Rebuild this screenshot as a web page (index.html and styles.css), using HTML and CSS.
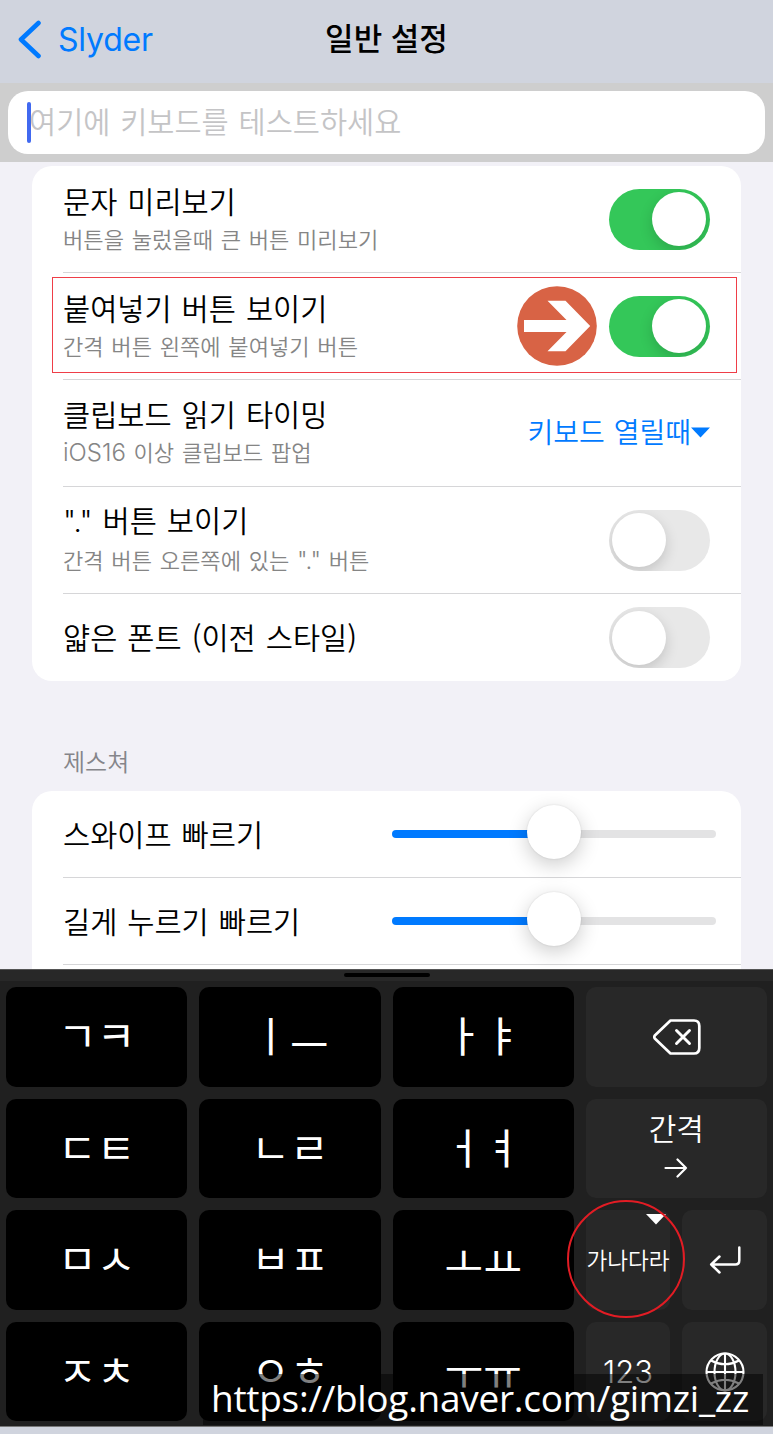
FILE: index.html
```html
<!DOCTYPE html>
<html lang="ko">
<head>
  <meta charset="UTF-8" />
  <title>일반 설정</title>
  <link rel="stylesheet" href="styles.css">
</head>
<body>

  <header class="navbar">
    <a class="back">
      <svg width="24" height="40" viewBox="0 0 24 40"><path d="M20.5 3 L3 19.5 L20.5 36" fill="none" stroke="#007aff" stroke-width="4.6" stroke-linecap="round" stroke-linejoin="round"/></svg>
      <span>Slyder</span>
    </a>
    <h1>일반 설정</h1>
  </header>

  <div class="search">
    <div class="field"><i class="caret"></i><span>여기에 키보드를 테스트하세요</span></div>
  </div>

  <main class="content">
    <section class="card">
      <div class="row">
        <div class="label"><h2>문자 미리보기</h2><p>버튼을 눌렀을때 큰 버튼 미리보기</p></div>
        <span class="toggle on"></span>
      </div>
      <div class="row">
        <div class="label"><h2>붙여넣기 버튼 보이기</h2><p>간격 버튼 왼쪽에 붙여넣기 버튼</p></div>
        <svg class="pointer" width="80" height="80" viewBox="0 0 80 80"><circle cx="40" cy="40" r="39.8" fill="#d86345"/><path d="M7 34 H49.5 L30.5 14.8 H48.5 L73.2 40 L48.5 65.2 H30.5 L49.5 46 H7 Z" fill="#fff"/></svg>
        <span class="toggle on"></span>
        <div class="highlight"></div>
      </div>
      <div class="row">
        <div class="label"><h2>클립보드 읽기 타이밍</h2><p><span class="latin">iOS16</span> 이상 클립보드 팝업</p></div>
        <span class="select"><span>키보드 열릴때</span><svg width="19" height="11" viewBox="0 0 19 11"><path d="M0 .5 H19 L9.5 10.5 Z" fill="#007aff"/></svg></span>
      </div>
      <div class="row">
        <div class="label"><h2><span class="latin">"."</span> 버튼 보이기</h2><p>간격 버튼 오른쪽에 있는 <span class="latin">"."</span> 버튼</p></div>
        <span class="toggle"></span>
      </div>
      <div class="row short">
        <h2>얇은 폰트 (이전 스타일)</h2>
        <span class="toggle"></span>
      </div>
    </section>

    <h3 class="group-title">제스쳐</h3>

    <section class="card cut">
      <div class="row short">
        <h2>스와이프 빠르기</h2>
        <div class="slider"><i class="knob"></i></div>
      </div>
      <div class="row short">
        <h2>길게 누르기 빠르기</h2>
        <div class="slider"><i class="knob"></i></div>
      </div>
    </section>
  </main>

  <div class="keyboard">
    <div class="grabber"><i></i></div>
    <div class="keys">
      <div class="key"><b>ㄱ</b><b>ㅋ</b></div>
      <div class="key"><b>ㅣ</b><b class="low">ㅡ</b></div>
      <div class="key"><b>ㅏ</b><b>ㅑ</b></div>
      <div class="key fn">
        <svg class="delete" width="48" height="36" viewBox="0 0 48 36"><path d="M17.5 1.5 H41 Q46.3 1.5 46.3 7 V29 Q46.3 34.5 41 34.5 H17.5 L1.8 19.5 Q.8 18 1.8 16.5 Z" fill="none" stroke="#fff" stroke-width="2.7" stroke-linejoin="round"/><path d="M23.5 11.5 L36.5 24.5 M36.5 11.5 L23.5 24.5" stroke="#fff" stroke-width="2.9" stroke-linecap="round"/></svg>
      </div>

      <div class="key"><b>ㄷ</b><b>ㅌ</b></div>
      <div class="key"><b>ㄴ</b><b>ㄹ</b></div>
      <div class="key"><b>ㅓ</b><b>ㅕ</b></div>
      <div class="key fn space">
        <span>간격</span>
        <svg width="24" height="20" viewBox="0 0 24 20"><path d="M1.5 10 H22 M13.5 1.5 L22 10 L13.5 18.5" fill="none" stroke="#fff" stroke-width="2.2" stroke-linecap="round" stroke-linejoin="round"/></svg>
      </div>

      <div class="key"><b>ㅁ</b><b>ㅅ</b></div>
      <div class="key"><b>ㅂ</b><b>ㅍ</b></div>
      <div class="key mid"><b>ㅗ</b><b>ㅛ</b></div>
      <div class="pair">
        <div class="key fn lang">
          <span>가나다라</span>
          <svg class="corner" width="20" height="11" viewBox="0 0 20 11"><path d="M0 0 H20 L10 10.5 Z" fill="#fff"/></svg>
          <div class="ring"></div>
        </div>
        <div class="key fn">
          <svg width="32" height="28" viewBox="0 0 32 28"><path d="M30.3 1.5 V14.5 Q30.3 18.5 26.3 18.5 H2.2 M10.5 10.5 L2.2 18.5 L10.5 26.5" fill="none" stroke="#fff" stroke-width="2.5" stroke-linecap="round" stroke-linejoin="round"/></svg>
        </div>
      </div>

      <div class="key"><b>ㅈ</b><b>ㅊ</b></div>
      <div class="key"><b>ㅇ</b><b>ㅎ</b></div>
      <div class="key mid"><b>ㅜ</b><b>ㅠ</b></div>
      <div class="pair">
        <div class="key fn num">123</div>
        <div class="key fn">
          <svg width="40" height="40" viewBox="0 0 40 40" fill="none" stroke="#fff" stroke-width="2.1"><circle cx="20" cy="20" r="18.5"/><ellipse cx="20" cy="20" rx="10.5" ry="18.5"/><path d="M20 1.5 V38.5 M1.5 20 H38.5 M6 8.5 Q20 16 34 8.5 M6 31.5 Q20 24 34 31.5"/></svg>
        </div>
      </div>
    </div>
    <div class="watermark">https://blog.naver.com/gimzi_zz</div>
  </div>

</body>
</html>
```
FILE: styles.css
```css
* {
  box-sizing: border-box;
}

body {
  margin: 0;
  height: 1434px;
  overflow: hidden;
  background: #d0d4de;
  color: #000;
  font-family: "Noto Sans CJK KR", sans-serif;
}

h1, h2, h3, p {
  margin: 0;
  font-weight: 350;
  white-space: nowrap;
}

svg {
  display: block;
  flex: none;
}

.latin {
  font-family: Inter, sans-serif;
}

/* top bar */
.navbar {
  display: grid;
  grid-template-columns: 1fr auto 1fr;
  align-items: center;
  height: 83px;
  padding: 0 18px 4px;
}

.back {
  display: flex;
  align-items: center;
  gap: 16px;
  color: #007aff;
  font-family: Inter, sans-serif;
  font-size: 32px;
  letter-spacing: -0.2px;
}

.navbar h1 {
  margin-top: -5px;
  font-size: 31px;
  font-weight: 500;
  line-height: 40px;
}

.search {
  height: 79px;
  padding: 8px;
  background: #cecece;
}

.field {
  display: flex;
  align-items: center;
  height: 63px;
  padding-left: 19px;
  border-radius: 20px;
  background: #fff;
  color: #c4c4c6;
  font-size: 29.5px;
  font-weight: 350;
  line-height: 40px;
  word-spacing: 1.5px;
}

.field span {
  margin-top: -6px;
}

.caret {
  width: 4px;
  height: 41px;
  margin-right: -2px;
  border-radius: 2px;
  background: #4169f0;
}

/* settings list */
.content {
  height: 807px;
  padding: 4px 32px 0;
  background: #f2f1f7;
  overflow: hidden;
}

.card {
  padding-left: 31px;
  border-radius: 20px;
  background: #fff;
}

.card.cut {
  height: 220px;
}

.row {
  display: flex;
  align-items: center;
  position: relative;
  height: 107px;
  padding-right: 31px;
  border-bottom: 1px solid #d6d6d8;
}

.row.short {
  height: 87px;
}

.card:not(.cut) .row:last-child {
  border-bottom: 0;
}

.row h2 {
  flex: 1;
  margin-top: -3px;
  font-size: 29.5px;
  line-height: 38px;
  word-spacing: 1.8px;
}

.label {
  flex: 1;
}

.label p {
  margin-top: 2px;
  color: #858585;
  font-size: 22.1px;
  line-height: 34px;
  word-spacing: 1.5px;
}

.label p .latin {
  font-size: 24px;
}

.toggle {
  width: 101px;
  height: 61px;
  padding: 3.5px 4px 3.5px 3px;
  border-radius: 31px;
  background: #e8e8e8;
  overflow: hidden;
}

.toggle::before {
  content: "";
  display: block;
  width: 54px;
  height: 54px;
  border-radius: 50%;
  background: #fff;
  box-shadow: 0 5px 14px rgba(0, 0, 0, 0.16);
}

.toggle.on {
  background: #34c759;
}

.toggle.on::before {
  margin-left: auto;
}

.pointer {
  margin-right: 12px;
}

.highlight {
  position: absolute;
  inset: 4px 4px 6px -11px;
  border: 1.5px solid #ef3e48;
}

.select {
  display: flex;
  align-items: center;
  color: #007aff;
  font-size: 28px;
  font-weight: 350;
  word-spacing: 1px;
}

.select span {
  margin-top: -5px;
}

.select svg {
  margin-top: -2px;
}

.group-title {
  height: 110px;
  padding: 63px 31px 0;
  color: #85858a;
  font-size: 24px;
  line-height: 34px;
}

.slider {
  width: 324px;
  height: 8px;
  margin-right: -6px;
  border-radius: 4px;
  background: linear-gradient(to right, #007aff 50%, #e3e3e4 50%);
}

.knob {
  display: block;
  width: 54px;
  height: 54px;
  margin: -25px auto 0;
  border-radius: 50%;
  background: #fff;
  box-shadow: 0 6px 20px rgba(0, 0, 0, 0.2), 0 0 2px rgba(0, 0, 0, 0.12);
}

/* keyboard */
.keyboard {
  position: relative;
  height: 458px;
  border-top: 1px solid #555;
  border-bottom: 1px solid #777;
  background: #202020;
}

.grabber {
  height: 11px;
  padding-top: 3px;
  background: #282828;
}

.grabber i {
  display: block;
  width: 86px;
  height: 4px;
  margin: 0 auto;
  border-radius: 2px;
  background: #000;
}

.keys {
  display: grid;
  grid-template-columns: repeat(4, 1fr);
  grid-template-rows: repeat(4, 99.6px);
  gap: 12px;
  padding: 6px;
}

.key {
  display: flex;
  align-items: center;
  justify-content: center;
  position: relative;
  border-radius: 10px;
  background: #000;
  color: #fff;
}

.key b {
  width: 38.7px;
  margin-top: -5px;
  font-size: 42px;
  font-weight: 400;
  line-height: 60px;
}

.key.mid b {
  margin-top: 0;
}

.key b.low {
  margin-top: 13px;
}

.key.fn {
  background: #282828;
}

.delete {
  margin-left: 2px;
}

.pair {
  display: grid;
  grid-template-columns: 1fr 1fr;
  gap: 12px;
}

.space {
  flex-direction: column;
  gap: 13px;
  padding-bottom: 9px;
  font-size: 30px;
  font-weight: 350;
  line-height: 36px;
}

.lang {
  z-index: 1;
  font-size: 22.6px;
  font-weight: 350;
  white-space: nowrap;
}

.num {
  font-family: Inter, sans-serif;
  font-size: 31px;
  font-weight: 300;
}

.corner {
  position: absolute;
  top: 4px;
  right: 4px;
}

.ring {
  position: absolute;
  top: -10px;
  left: -19px;
  width: 118px;
  height: 118px;
  border: 2px solid #e21c24;
  border-radius: 50%;
}

.watermark {
  position: absolute;
  top: 404px;
  left: 203px;
  z-index: 2;
  width: 560px;
  height: 51px;
  padding-left: 8px;
  background: rgba(0, 0, 0, 0.5);
  color: #fff;
  font-family: "Open Sans", sans-serif;
  font-size: 37px;
  letter-spacing: -0.28px;
  line-height: 48px;
  white-space: nowrap;
}
```
